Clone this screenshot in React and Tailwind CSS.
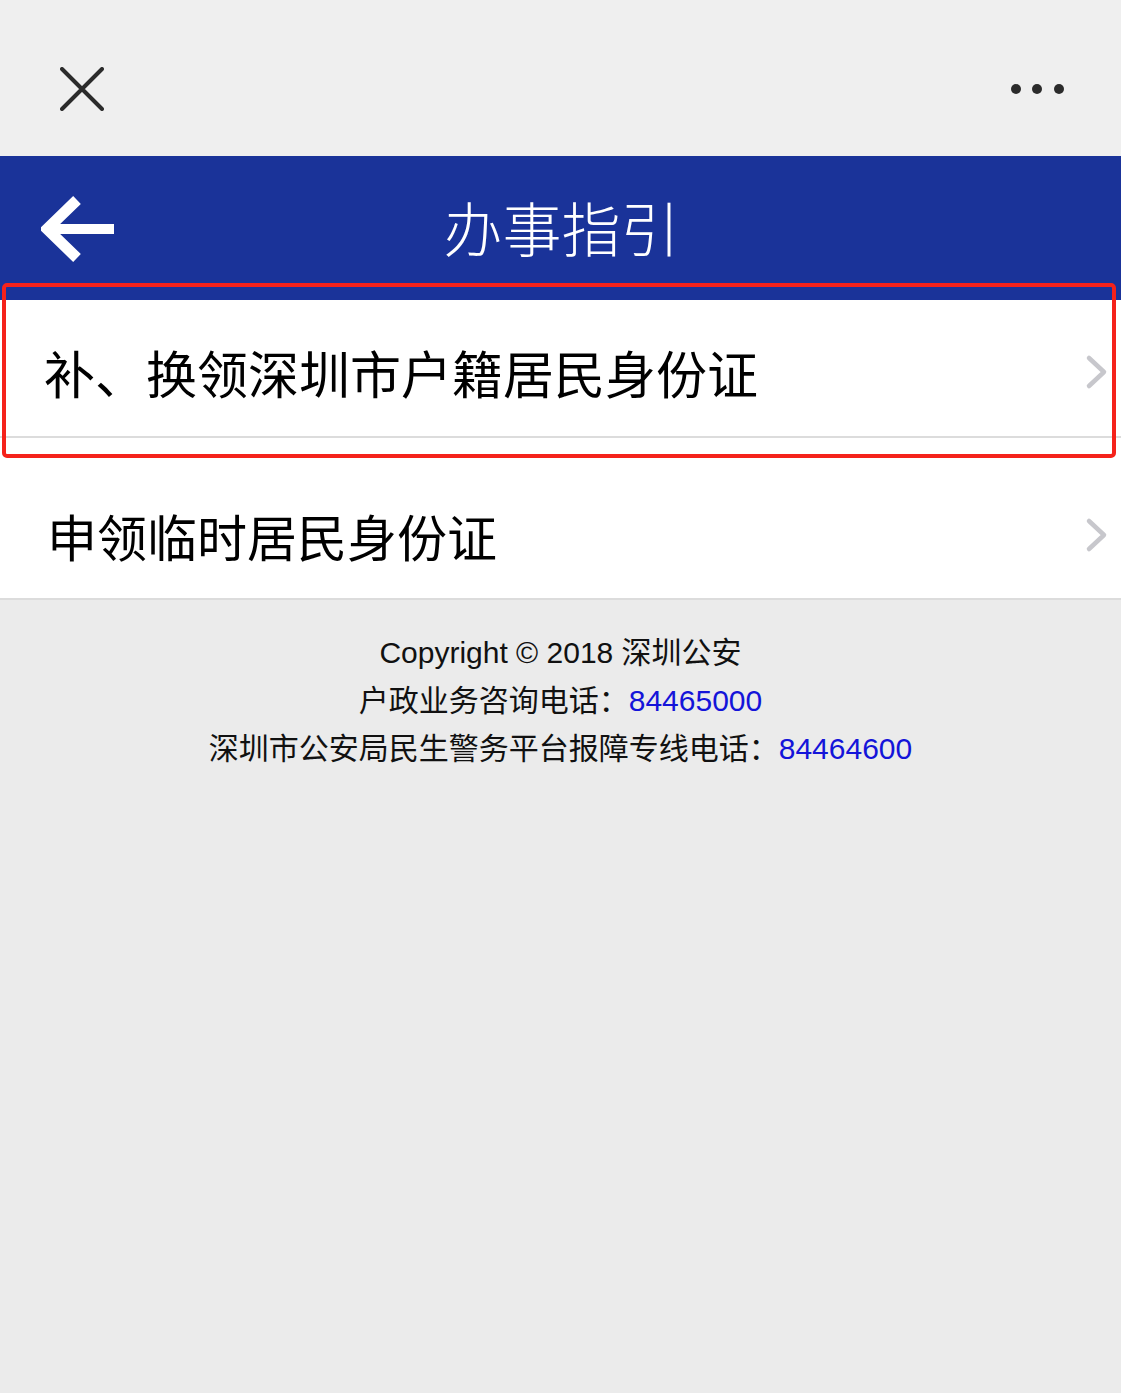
import React from 'react';

const cjk = { fontFamily: '"Noto Sans CJK SC", "Noto Sans", sans-serif' };
const footerFont = { fontFamily: '"Liberation Sans", "Noto Sans CJK SC", sans-serif' };

const Chevron = () => (
  <svg width="24" height="36" viewBox="0 0 24 36" className="shrink-0">
    <path d="M4 4 L19 18 L4 32" fill="none" stroke="#c7c7cc" strokeWidth="4.5" strokeLinecap="round" strokeLinejoin="round" />
  </svg>
);

const App = () => {
  const items = ['补、换领深圳市户籍居民身份证', '申领临时居民身份证'];

  return (
    <div className="w-[1121px] h-[1393px] bg-[#ebebeb] relative overflow-hidden" style={cjk}>
      {/* 顶部栏 */}
      <div className="h-[156px] bg-[#efefef] flex items-center justify-between pl-[60px] pr-[56px] pt-[22px]">
        <svg width="44" height="44" viewBox="0 0 44 44">
          <path d="M2 2 L42 42 M42 2 L2 42" stroke="#2b2b2b" strokeWidth="4" strokeLinecap="round" />
        </svg>
        <svg width="54" height="12" viewBox="0 0 54 12">
          <circle cx="5" cy="6" r="5" fill="#2b2b2b" />
          <circle cx="26" cy="6" r="5" fill="#2b2b2b" />
          <circle cx="48" cy="6" r="5" fill="#2b2b2b" />
        </svg>
      </div>

      {/* 标题栏 */}
      <div className="h-[144px] bg-[#1a3399] relative flex items-center justify-center">
        <svg width="74" height="66" viewBox="0 0 74 66" className="absolute left-[41px] top-[40px]">
          <path d="M36 4 L6 33 L36 62" fill="none" stroke="#ffffff" strokeWidth="11" strokeLinejoin="miter" />
          <path d="M8 33 L73 33" stroke="#ffffff" strokeWidth="10" />
        </svg>
        <span className="text-white text-[59px] font-light leading-none -mt-[3px] ml-[2px]">办事指引</span>
      </div>

      {/* 列表 */}
      <div className="bg-white">
        <div className="h-[138px] flex items-center justify-between pl-[44px] pr-[12px] border-b-2 border-[#dcdcdc] pt-[8px]">
          <span className="text-[51px] text-black leading-none">{items[0]}</span>
          <Chevron />
        </div>
        <div className="h-[162px] flex items-center justify-between pl-[47px] pr-[12px] border-b-2 border-[#dcdcdc] pt-[34px]">
          <span className="text-[50px] text-black leading-none">{items[1]}</span>
          <Chevron />
        </div>
      </div>

      {/* 页脚 */}
      <div className="flex flex-col items-center pt-[29px] text-[30px] leading-[48px] text-[#111]" style={footerFont}>
        <p>Copyright © 2018 深圳公安</p>
        <p>户政业务咨询电话：<span className="text-[#1414d9]">84465000</span></p>
        <p>深圳市公安局民生警务平台报障专线电话：<span className="text-[#1414d9]">84464600</span></p>
      </div>

      {/* 红色标注框 */}
      <div className="absolute left-[2px] top-[283px] w-[1114px] h-[175px] border-[4px] border-[#f5221b] rounded-[5px]" />
    </div>
  );
};

export default App;
